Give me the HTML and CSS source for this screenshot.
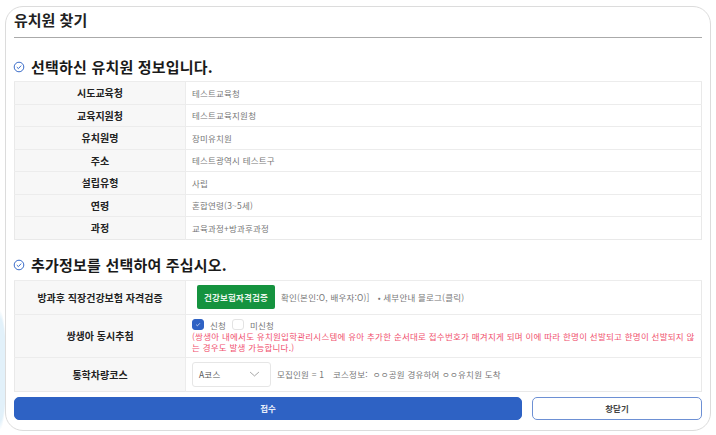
FILE: index.html
```html
<!DOCTYPE html>
<html lang="ko">
<head>
<meta charset="utf-8">
<title>유치원 찾기</title>
<link rel="stylesheet" href="styles.css">
</head>
<body>
<main class="card">
  <h1 class="title">유치원 찾기</h1>
  <h2 class="section first">
    <svg class="check" viewBox="0 0 12 12"><circle cx="6" cy="6" r="4.8"/><path d="M3.8 6.1 5.4 7.6 8.2 4.6"/></svg>
    선택하신 유치원 정보입니다.
  </h2>
  <table class="info">
    <tr><th>시도교육청</th><td>테스트교육청</td></tr>
    <tr><th>교육지원청</th><td>테스트교육지원청</td></tr>
    <tr><th>유치원명</th><td>장미유치원</td></tr>
    <tr><th>주소</th><td>테스트광역시 테스트구</td></tr>
    <tr><th>설립유형</th><td>사립</td></tr>
    <tr><th>연령</th><td>혼합연령(3~5세)</td></tr>
    <tr><th>과정</th><td>교육과정+방과후과정</td></tr>
  </table>
  <h2 class="section second">
    <svg class="check" viewBox="0 0 12 12"><circle cx="6" cy="6" r="4.8"/><path d="M3.8 6.1 5.4 7.6 8.2 4.6"/></svg>
    추가정보를 선택하여 주십시오.
  </h2>
  <table class="extra">
    <tr class="r1">
      <th>방과후 직장건강보험 자격검증</th>
      <td><div class="line"><span class="green">건강보험자격검증</span><span>확인(본인:O, 배우자:O)]</span><span class="blog">• 세부안내 블로그(클릭)</span></div></td>
    </tr>
    <tr class="r2">
      <th>쌍생아 동시추첨</th>
      <td>
        <div class="opts"><span class="box on"><svg viewBox="0 0 12 12"><path d="M3.5 6.2 5.2 7.8 8.6 4.3"/></svg></span><span class="lab">신청</span><span class="box"></span><span class="lab">미신청</span></div>
        <p class="warn">(쌍생아 내에서도 유치원입학관리시스템에 유아 추가한 순서대로 접수번호가 매겨지게 되며 이에 따라 한명이 선발되고 한명이 선발되지 않는 경우도 발생 가능합니다.)</p>
      </td>
    </tr>
    <tr class="r3">
      <th>통학차량코스</th>
      <td><div class="line"><span class="select">A코스<svg viewBox="0 0 20 10"><path d="M2 1.5 10 8.5 18 1.5"/></svg></span><span class="meta">모집인원 = 1</span><span class="meta course">코스정보:</span><span class="meta">ㅇㅇ공원 경유하여 ㅇㅇ유치원 도착</span></div></td>
    </tr>
  </table>
  <div class="actions">
    <button class="btn primary">접수</button>
    <button class="btn ghost">창닫기</button>
  </div>
</main>
</body>
</html>
```
FILE: styles.css
```css
* { box-sizing: border-box; }
html, body { margin: 0; height: 100%; }
body {
  width: 716px;
  height: 435px;
  overflow: hidden;
  padding: 6px 5px 4px 5px;
  background: radial-gradient(ellipse 7px 60px at 0 370px, #e2f1fa 85%, #fff 100%);
  font-family: "Noto Sans CJK KR", "Noto Sans", sans-serif;
  color: #222;
}
.card {
  width: 706px;
  height: 425px;
  padding: 0 8px;
  background: #fff;
  border: 1px solid #dcdcdc;
  border-radius: 18px;
}
.title {
  margin: 0;
  height: 31px;
  padding-top: 3px;
  font-size: 15px;
  line-height: 20px;
  font-weight: 700;
  color: #222;
  border-bottom: 1px solid #aaa;
}
.section {
  display: flex;
  align-items: center;
  gap: 5px;
  margin: 0;
  font-size: 15px;
  line-height: 20px;
  font-weight: 700;
  letter-spacing: .2px;
  color: #1a1a1a;
}
.section.first { margin-top: 19px; margin-bottom: 4px; }
.section.second { margin-top: 15px; margin-bottom: 5px; }
.check { width: 12px; height: 12px; flex: none; margin-left: -1px; margin-right: 1px; }
.check circle, .check path { fill: none; stroke: #3a6cc9; stroke-width: 1; }
table {
  width: 688px;
  border-collapse: collapse;
  table-layout: fixed;
  border: 1px solid #e9e9e9;
}
th, td { border-top: 1px solid #ececec; padding: 0; }
th {
  width: 171px;
  background: #f7f7f7;
  border-right: 1px solid #ececec;
  font-size: 10px;
  font-weight: 700;
  color: #222;
  text-align: center;
}
td { padding-left: 6px; font-size: 8.5px; letter-spacing: .2px; color: #777; }
.info { height: 158px; }
.info tr { height: 22.5px; }
.extra { height: 111px; }
.r1 { height: 34px; }
.r2 { height: 43px; }
.r3 { height: 34px; }
.line { display: flex; align-items: center; }
.green {
  width: 78px;
  height: 24px;
  margin-left: 5px;
  margin-right: 6px;
  background: #15933f;
  border-radius: 2px;
  color: #e9f6ec;
  font-size: 8.5px;
  font-weight: 700;
  line-height: 24px;
  text-align: center;
}
.blog { margin-left: 8px; }
.opts { display: flex; align-items: center; height: 11px; }
.box {
  width: 12px;
  height: 11px;
  margin-right: 6px;
  background: #fff;
  border: 1px solid #e3e3e3;
  border-radius: 3px;
}
.box.on { background: #2f62c4; border-color: #2f62c4; display: flex; }
.box svg { width: 10px; height: 9px; }
.box path { fill: none; stroke: #dfe8fa; stroke-width: 1; }
.lab { margin-right: 6px; }
.warn {
  margin: 1px 0 0;
  font-size: 8.5px;
  line-height: 10.5px;
  color: #f0506e;
  word-break: break-all;
  padding-right: 6px;
  letter-spacing: .25px;
}
.select {
  display: flex;
  align-items: center;
  justify-content: space-between;
  width: 79px;
  height: 25px;
  padding: 0 10px 0 6px;
  margin-right: 6px;
  border: 1px solid #e6e6e6;
  border-radius: 3px;
  color: #555;
}
.select svg { width: 11px; height: 6px; }
.select path { fill: none; stroke: #777; stroke-width: 1.2; }
.meta { margin-right: 9px; }
.meta.course { margin-right: 5px; }
.actions { display: flex; gap: 10px; margin-top: 5px; }
.btn {
  height: 23px;
  padding: 0;
  border-radius: 5px;
  font-family: inherit;
  font-size: 8.5px;
  font-weight: 700;
}
.primary { width: 508px; background: #2e62c4; border: 1px solid #2e62c4; color: #e6edf9; }
.ghost { width: 170px; background: #fff; border: 1px solid #6d90d4; color: #444; }
```
